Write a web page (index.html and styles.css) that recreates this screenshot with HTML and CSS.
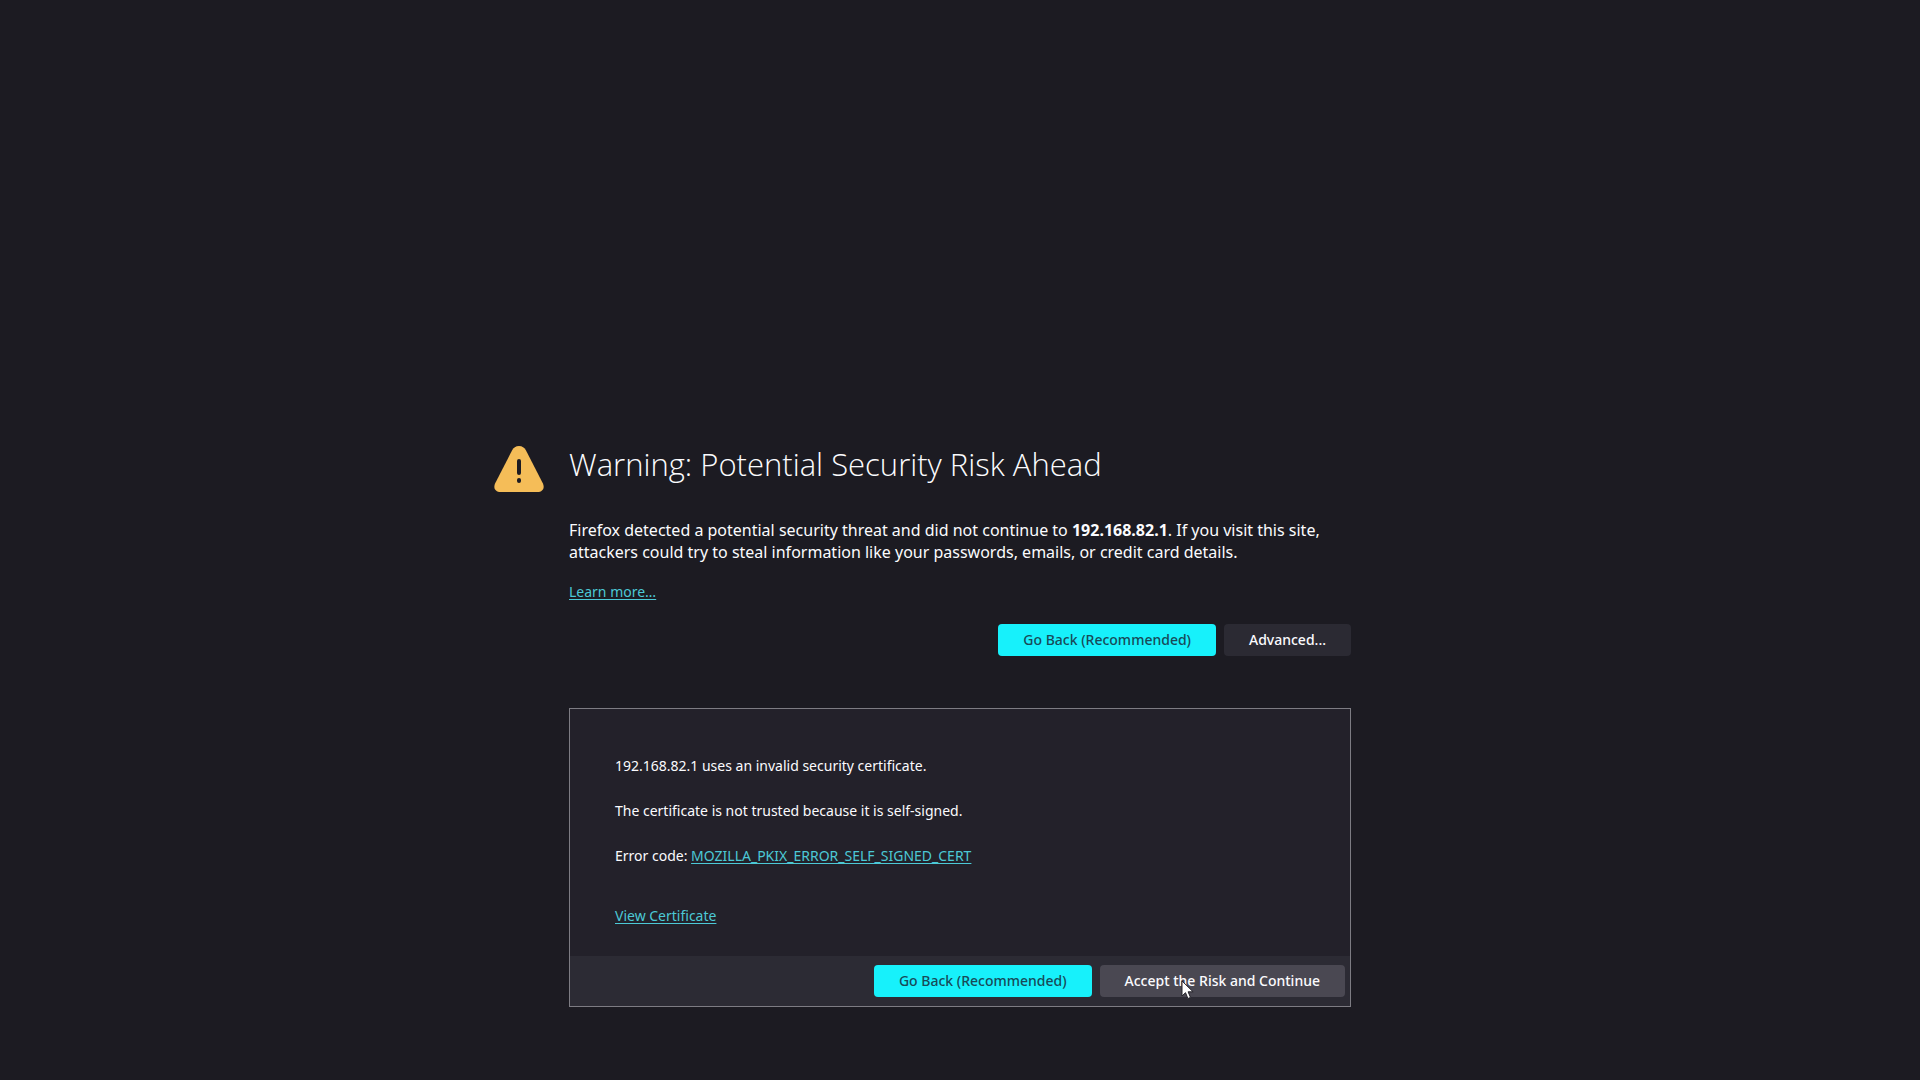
FILE: index.html
```html
<!DOCTYPE html>
<html lang="en">
<head>
  <meta charset="utf-8">
  <meta name="viewport" content="width=device-width, initial-scale=1">
  <title>Warning: Potential Security Risk Ahead</title>
  <link rel="stylesheet" href="styles.css">
</head>
<body>
  <main class="page">
    <svg class="warning-icon" viewBox="0 0 50 48" aria-hidden="true">
      <path class="warning-shape" d="M25 1c3.200 0 5.500 1.600 7 4.500l16.800 32.800c2.400 4.800-.4 8.700-5.300 8.700h-37c-4.900 0-7.700-3.900-5.300-8.700L18 5.500C19.500 2.600 21.800 1 25 1z"/>
      <rect class="warning-mark" x="23" y="14" width="4" height="16" rx="2"/>
      <rect class="warning-mark" x="23" y="33" width="4" height="5" rx="2"/>
    </svg>
    <div class="content">
      <h1 class="title">Warning: Potential Security Risk Ahead</h1>
      <p class="intro">Firefox detected a potential security threat and did not continue to <b>192.168.82.1</b>. If you visit this site, attackers could try to steal information like your passwords, emails, or credit card details.</p>
      <p class="learn"><a class="link" href="#learn">Learn more…</a></p>
      <div class="buttons">
        <button class="button primary" type="button">Go Back (Recommended)</button>
        <button class="button" type="button">Advanced...</button>
      </div>
      <section class="panel">
        <div class="details">
          <p class="detail">192.168.82.1 uses an invalid security certificate.</p>
          <p class="detail">The certificate is not trusted because it is self-signed.</p>
          <p class="detail">Error code: <a class="link" href="#code">MOZILLA_PKIX_ERROR_SELF_SIGNED_CERT</a></p>
          <p class="detail certificate"><a class="link" href="#certificate">View Certificate</a></p>
        </div>
        <div class="buttons panel-buttons">
          <button class="button primary" type="button">Go Back (Recommended)</button>
          <button class="button hovered" type="button">Accept the Risk and Continue
            <svg class="pointer" viewBox="0 0 13 20" aria-hidden="true"><path d="M1 1v15l3.500-3.300 2.400 5.800 2.600-1.100-2.400-5.600h5z"/></svg>
          </button>
        </div>
      </section>
    </div>
  </main>
</body>
</html>
```
FILE: styles.css
```css
* {
  box-sizing: border-box;
}

body {
  margin: 0;
  min-height: 100vh;
  background: #1c1b22;
  color: #fbfbfe;
  font: 14px/21px "Noto Sans", "Open Sans", sans-serif;
}

h1,
p {
  margin: 0;
}

.page {
  display: grid;
  grid-template-columns: 1fr minmax(0, 782px) 1fr;
  padding: 40vh 0 48px;
}

.warning-icon {
  justify-self: end;
  width: 50px;
  height: 48px;
  margin: 13px 25px 0 0;
}

.warning-shape {
  fill: #f5bd58;
}

.warning-mark {
  fill: #1c1b22;
}

.title {
  padding-top: 8px;
  font-family: "Open Sans", "Noto Sans", sans-serif;
  font-size: 31px;
  font-weight: 300;
  line-height: 48px;
}

.intro {
  margin-top: 31px;
  font-size: 16px;
  line-height: 22px;
}

.learn {
  margin-top: 18px;
}

.link {
  color: #4cc9d6;
  text-underline-offset: 2px;
}

.buttons {
  display: flex;
  flex-wrap: wrap;
  justify-content: flex-end;
  gap: 8px;
  margin-top: 22px;
}

.button {
  position: relative;
  height: 32px;
  padding: 0 25px;
  border: 0;
  border-radius: 4px;
  background: #2b2a33;
  color: #fbfbfe;
  font: 500 14px/20px "Noto Sans", "Open Sans", sans-serif;
}

.primary {
  background: #17f1fb;
  color: #184a58;
}

.hovered {
  background: #4a4852;
}

.panel {
  margin-top: 52px;
  border: 1px solid #7d7c83;
  background: #23212a;
}

.details {
  display: grid;
  gap: 24px;
  padding: 46px 45px 30px;
}

.certificate {
  padding-top: 15px;
}

.panel-buttons {
  margin: 0;
  padding: 9px 5px;
  background: #2c2b34;
}

.pointer {
  position: absolute;
  top: 15px;
  left: 81px;
  width: 13px;
  height: 20px;
  fill: #fff;
  stroke: #25242b;
}
```
